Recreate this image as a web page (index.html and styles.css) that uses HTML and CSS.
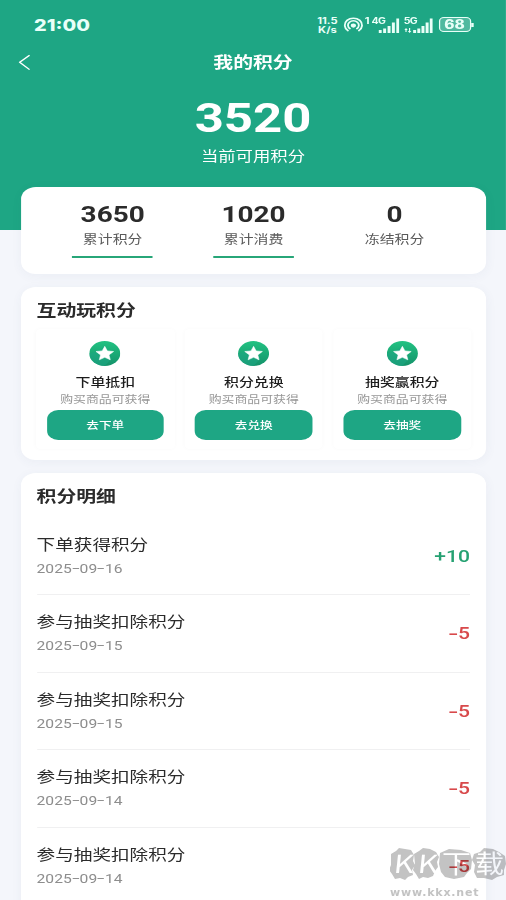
FILE: index.html
```html
<!DOCTYPE html>
<html lang="zh-CN">
<head>
<meta charset="utf-8">
<title>我的积分</title>
<link rel="stylesheet" href="styles.css">
</head>
<body>
<svg class="defs" width="0" height="0">
  <defs>
    <linearGradient id="coin" x1="0" y1="0" x2="0" y2="1"><stop offset="0" stop-color="#22c282"/><stop offset="1" stop-color="#14926a"/></linearGradient>
    <symbol id="star" viewBox="0 0 25 25">
      <circle cx="12.5" cy="12.5" r="12.5" fill="url(#coin)"/>
      <path d="M0 12.5A12.5 12.5 0 0 0 12.5 25L18 17.5 12.5 5 7 10Z" fill="#1ea684" opacity=".6"/>
      <path d="M12.5 5.300l2.100 4.600 5 .6-3.700 3.400 1 4.900-4.400-2.500-4.400 2.500 1-4.900-3.700-3.400 5-.6z" fill="#fff" stroke="#fff" stroke-width=".5"/>
    </symbol>
  </defs>
</svg>
<div class="screen">
  <header class="hero">
    <div class="status">
      <span class="clock">21:00</span>
      <div class="signals">
        <span class="speed"><span>11.5</span><span>K/s</span></span>
        <svg class="hotspot" viewBox="0 0 16 16" fill="none" stroke="#e9fff8" stroke-width="1.5" stroke-linecap="round"><path d="M3.600 13.600A7 7 0 1 1 12.400 13.600M5.200 11.600A4.400 4.400 0 1 1 10.800 11.600"/><circle cx="8" cy="8.600" r="1.400" fill="#e9fff8"/></svg>
        <span class="one">1</span>
        <span class="net"><b>4G</b><svg viewBox="0 0 20 15" preserveAspectRatio="none"><path d="M.5 12h2.800v3H.5zM4.700 10.500h2.800V15H4.700zM8.900 8h2.800v7H8.900zM13 4.500h2.800V15H13zM17.200 .5H20V15h-2.800z"/></svg></span>
        <span class="net five"><b>5G</b><svg viewBox="0 0 24 15" preserveAspectRatio="none"><path d="M0 12l1.500-2L3 12H2v2H1v-2zM3 13h1v-3h1v3h1l-1.500 2zM7.500 12h2.500v3H7.500zM11 10.500h2.500V15H11zM14.500 8H17v7h-2.500zM18 4.500h2.500V15H18zM21.500 .5H24V15h-2.500z"/></svg></span>
        <span class="battery">68</span><i class="cap"></i>
      </div>
    </div>
    <nav class="nav">
      <svg class="back" viewBox="0 0 10 17" fill="none" stroke="#fff" stroke-width="1.3"><path d="M9.300 .8L.9 8.300l8.400 7.700"/></svg>
      <h1>我的积分</h1>
    </nav>
    <div class="total">3520</div>
    <div class="total-label">当前可用积分</div>
  </header>

  <section class="card stats">
    <div class="stat active"><strong>3650</strong><span>累计积分</span></div>
    <div class="stat active"><strong>1020</strong><span>累计消费</span></div>
    <div class="stat"><strong>0</strong><span>冻结积分</span></div>
  </section>

  <section class="card play">
    <h2>互动玩积分</h2>
    <div class="tiles">
      <div class="tile"><svg class="coin"><use href="#star"/></svg><h3>下单抵扣</h3><p>购买商品可获得</p><a class="btn">去下单</a></div>
      <div class="tile"><svg class="coin"><use href="#star"/></svg><h3>积分兑换</h3><p>购买商品可获得</p><a class="btn">去兑换</a></div>
      <div class="tile"><svg class="coin"><use href="#star"/></svg><h3>抽奖赢积分</h3><p>购买商品可获得</p><a class="btn">去抽奖</a></div>
    </div>
  </section>

  <section class="card details">
    <h2>积分明细</h2>
    <ul>
      <li><div><h4>下单获得积分</h4><time>2025<i>-</i>09<i>-</i>16</time></div><span class="amount plus">+10</span></li>
      <li><div><h4>参与抽奖扣除积分</h4><time>2025<i>-</i>09<i>-</i>15</time></div><span class="amount"><i>-</i>5</span></li>
      <li><div><h4>参与抽奖扣除积分</h4><time>2025<i>-</i>09<i>-</i>15</time></div><span class="amount"><i>-</i>5</span></li>
      <li><div><h4>参与抽奖扣除积分</h4><time>2025<i>-</i>09<i>-</i>14</time></div><span class="amount"><i>-</i>5</span></li>
      <li><div><h4>参与抽奖扣除积分</h4><time>2025<i>-</i>09<i>-</i>14</time></div><span class="amount"><i>-</i>5</span></li>
    </ul>
  </section>
</div>
<div class="watermark">
  <svg viewBox="0 0 116 32" width="116" height="32">
    <path fill="#c3c3c3" d="M1 6l5-3 3-3 6 1 6 1 3 5-1 6 2 4-3 5 1 5-5 2-3 3-5-2-5 1-3-5-3-4 2-5zM24 6l5-3 4-3 7 1 6 3 3 5-2 5 1 5-3 4-2 5-5 2-5-1-4 2-3-5-3-4 2-6zM50 5l9-4 12 1 9 3 2 7-1 9-4 4-3 4-10 2-9-2-4-5-2-8zM84 6l6-2 4-4 9 1 6 3 6 4 1 8-2 6v5l-7 2-5 3-8-2-7 0-3-6 1-7-3-5z"/>
    <g class="wm-text"><text transform="translate(3 25) skewX(-6)" textLength="20" lengthAdjust="spacingAndGlyphs">K</text><text transform="translate(27 25) skewX(-6)" textLength="20" lengthAdjust="spacingAndGlyphs">K</text><text x="52" y="25" textLength="29" lengthAdjust="spacingAndGlyphs">下</text><text x="85" y="25" textLength="29" lengthAdjust="spacingAndGlyphs">载</text></g>
  </svg>
  <div class="wm-url">www.kkx.net</div>
</div>
</body>
</html>
```
FILE: styles.css
```css
* { box-sizing: border-box; margin: 0; padding: 0; }

html, body { height: 900px; overflow: hidden; background: #f4f6fb; }

body {
  position: relative;
  width: 506px;
  font-family: "Noto Sans CJK SC", sans-serif;
  color: #2b2b2b;
}

i { font-style: normal; }
.defs { display: block; position: absolute; }

/* The layout is 408 units wide and stretched across the window. */
.screen {
  width: 408.06px;
  height: 900px;
  overflow: hidden;
  transform: scaleX(1.24);
  transform-origin: 0 0;
}

.hero { height: 230px; background: #1ea684; color: #fff; text-align: center; }

.status {
  height: 49px;
  padding: 0 26.500px 0 27.500px;
  display: flex;
  align-items: center;
  justify-content: space-between;
  color: #e9fff8;
}
.clock { font: 800 16px/20px Inter, sans-serif; }
.signals { display: flex; align-items: center; height: 18px; }
.speed { display: flex; flex-direction: column; width: 19px; font: 700 9px/9px Inter, sans-serif; text-align: center; }
.hotspot { width: 16px; height: 16px; margin-left: 3.500px; }
.one { font: 700 9px/9px Inter, sans-serif; align-self: flex-start; width: 5px; margin-left: .5px; }
.net { display: flex; position: relative; width: 22px; height: 16px; margin-left: 1px; align-items: flex-end; justify-content: flex-end; }
.net b { position: absolute; left: 0; top: 0; font: 700 8.500px/8px Inter, sans-serif; letter-spacing: -.5px; }
.net svg { width: 17px; height: 15px; fill: #e9fff8; }
.net.five { width: 23px; margin-left: 4px; }
.net.five svg { width: 23px; }
.battery {
  width: 26px; height: 15px; margin-left: 5px;
  border: 1px solid #e9fff8; border-radius: 4px;
  background: rgba(255, 255, 255, .22);
  font: 800 12.500px/13px Inter, sans-serif; text-align: center;
}
.cap { width: 1.500px; height: 4px; margin-left: .5px; background: #e9fff8; }

.nav { position: relative; height: 26px; }
.nav h1 { font-size: 16px; line-height: 24px; font-weight: 700; }
.back { position: absolute; left: 15px; top: 4.500px; width: 9.500px; height: 17px; }
.total { margin-top: 15px; height: 54px; line-height: 57px; font-family: Roboto, sans-serif; font-size: 41px; font-weight: 700; }
.total-label { height: 22px; line-height: 22px; font-size: 14px; }

.card { margin: 0 16px 0 17px; background: #fff; border-radius: 12px; box-shadow: 0 2px 10px rgba(60, 70, 110, .05); }

.stats { position: relative; margin-top: -43px; height: 87px; padding: 13px 17px 0; display: flex; }
.stat { flex: 1; display: flex; flex-direction: column; align-items: center; }
.stat strong { height: 27px; line-height: 28px; font-family: Roboto, sans-serif; font-size: 22.500px; font-weight: 700; }
.stat span { width: 65px; height: 30.500px; line-height: 23px; font-size: 12px; text-align: center; color: #5a5a5a; }
.stat.active span { border-bottom: 2px solid #27a678; }

.play { margin-top: 13px; height: 173px; padding: 9px 12px 0; }
h2 { font-size: 16px; line-height: 26px; font-weight: 700; padding-left: .5px; }
.tiles { display: grid; grid-template-columns: repeat(3, 1fr); gap: 8.500px; margin: 7px 0 0 .3px; }
.tile {
  height: 120px; padding-top: 11.500px; border-radius: 4px;
  box-shadow: 0 0 4px rgba(0, 0, 0, .025);
  display: flex; flex-direction: column; align-items: center;
}
.coin { width: 25px; height: 25px; }
.tile h3 { margin-top: 6px; font-size: 12px; line-height: 20px; font-weight: 500; color: #1c1c1c; }
.tile p { font-size: 10.400px; line-height: 14px; color: #969696; }
.btn { margin-top: 4.500px; width: 94.500px; height: 30px; border-radius: 9px; background: #1ea684; color: #fff; font-size: 10.200px; line-height: 29px; text-align: center; font-weight: 500; }

.details { margin-top: 13px; height: 500px; padding: 9px 12px 0; }
.details ul { list-style: none; margin: 10px 1px 0 .5px; }
.details li { height: 77.400px; padding: 14px 0 0; display: flex; justify-content: space-between; border-bottom: 1px solid #f0f0f1; }
.details h4 { font-size: 15px; line-height: 24px; font-weight: 400; }
.details time { display: block; font-family: Roboto, sans-serif; font-size: 12.600px; line-height: 26px; color: #8d8d8d; }
time i { display: inline-block; width: 6.400px; text-align: center; transform: translateY(-1px) scaleX(1.7); }
.amount { line-height: 49px; font-family: Roboto, sans-serif; font-size: 17px; font-weight: 500; color: #d8494b; }
.amount i { display: inline-block; width: 7px; text-align: center; transform: translateY(-.5px) scaleX(1.400); }
.amount.plus { color: #25a172; }

.watermark { position: absolute; left: 390px; top: 848px; width: 116px; mix-blend-mode: multiply; }
.watermark svg { display: block; }
.wm-text { font: 400 25px "Noto Sans CJK SC", sans-serif; fill: #fff; }
.wm-url { width: 94px; margin-top: 6px; font: 700 11px/14px "DejaVu Sans", sans-serif; letter-spacing: .8px; color: #c3c3c3; white-space: nowrap; }
```
